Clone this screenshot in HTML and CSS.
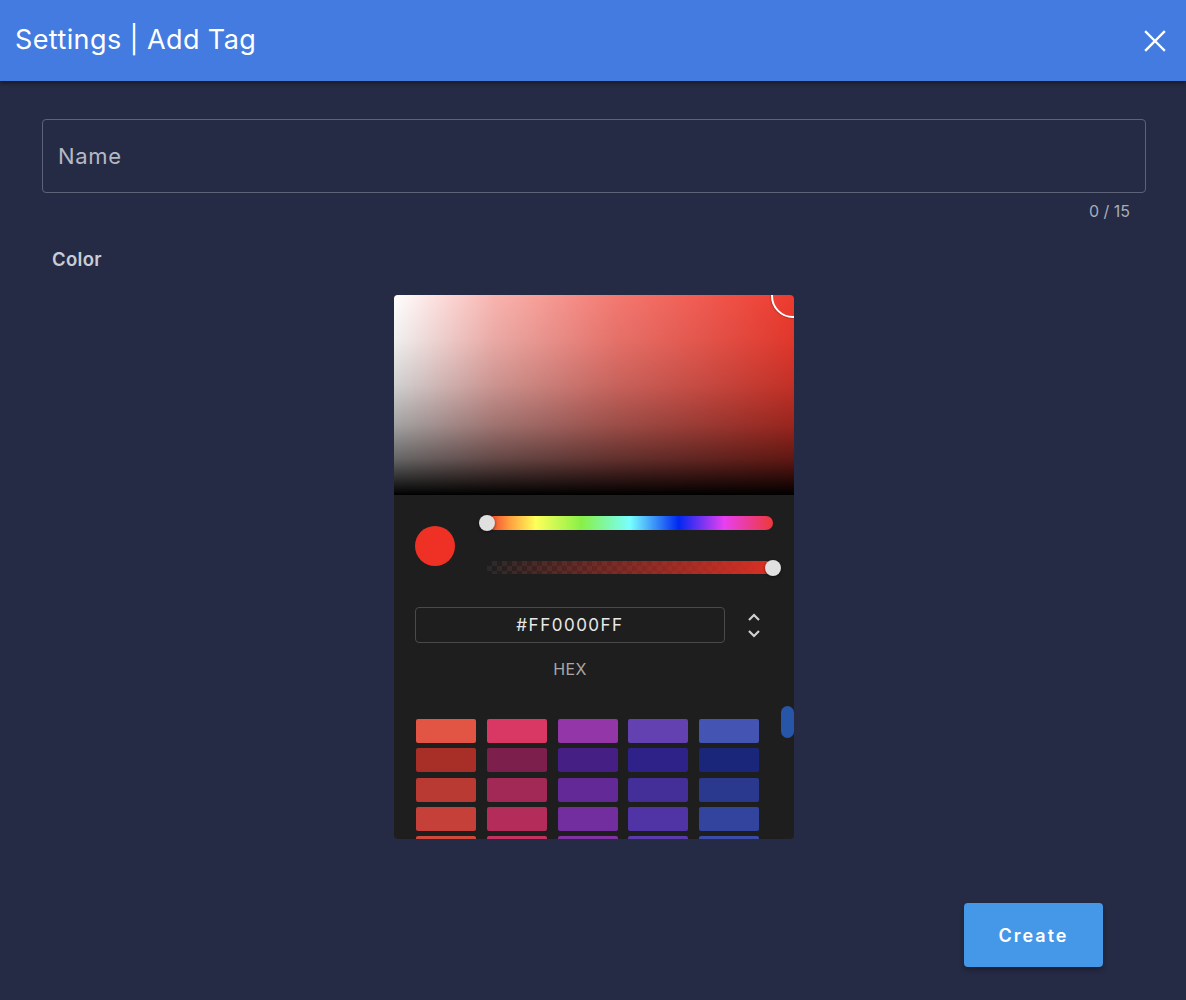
FILE: index.html
```html
<!DOCTYPE html>
<html>
<head>
<meta charset="utf-8">
<link rel="stylesheet" href="styles.css">
</head>
<body>
<header class="bar">
  <div class="title">Settings | Add Tag</div>
  <svg class="close" width="22" height="22" viewBox="0 0 22 22"><path d="M2 2L20 20M20 2L2 20" stroke="#fff" stroke-width="2.4" stroke-linecap="square"/></svg>
</header>
<main class="content">
  <div class="field"><span class="placeholder">Name</span></div>
  <div class="counter">0 / 15</div>
  <div class="label">Color</div>
  <div class="picker">
    <div class="canvas"><div class="canvas-dot"></div></div>
    <div class="controls">
      <div class="preview"></div>
      <div class="sliders">
        <div class="slider hue"><div class="track hue-track"></div><div class="thumb thumb-left"></div></div>
        <div class="slider alpha"><div class="track alpha-track"></div><div class="thumb thumb-right"></div></div>
      </div>
    </div>
    <div class="edit">
      <div class="hex-col">
        <div class="hex-input">#FF0000FF</div>
        <div class="hex-label">HEX</div>
      </div>
      <svg class="toggle" width="16" height="30" viewBox="0 0 16 30"><path d="M3 9L8 4L13 9M3 20L8 25L13 20" fill="none" stroke="#d0d0d0" stroke-width="2.2"/></svg>
    </div>
    <div class="swatches">
      <div class="grid">
        <div class="sw" style="background:#e25544"></div>
        <div class="sw" style="background:#d93865"></div>
        <div class="sw" style="background:#9236a8"></div>
        <div class="sw" style="background:#6341b1"></div>
        <div class="sw" style="background:#4354b3"></div>
        <div class="sw" style="background:#a82e28"></div>
        <div class="sw" style="background:#7c1f4d"></div>
        <div class="sw" style="background:#451f84"></div>
        <div class="sw" style="background:#2e2188"></div>
        <div class="sw" style="background:#1a267a"></div>
        <div class="sw" style="background:#b83a32"></div>
        <div class="sw" style="background:#a22855"></div>
        <div class="sw" style="background:#632996"></div>
        <div class="sw" style="background:#442e98"></div>
        <div class="sw" style="background:#2a388d"></div>
        <div class="sw" style="background:#c44038"></div>
        <div class="sw" style="background:#b42d5a"></div>
        <div class="sw" style="background:#722e9e"></div>
        <div class="sw" style="background:#5034a6"></div>
        <div class="sw" style="background:#32449d"></div>
        <div class="sw" style="background:#d04a3c"></div>
        <div class="sw" style="background:#c4335f"></div>
        <div class="sw" style="background:#8232a3"></div>
        <div class="sw" style="background:#5a3aac"></div>
        <div class="sw" style="background:#3a4ca8"></div>
      </div>
      <div class="scroll-thumb"></div>
    </div>
  </div>
  <div class="actions"><button class="create">Create</button></div>
</main>
</body>
</html>
```
FILE: styles.css
```css
html, body { margin: 0; padding: 0; }
body {
  background: #252b44;
  font-family: "Inter", "Open Sans", sans-serif;
  color: #fff;
  width: 1186px;
  height: 1000px;
  overflow: hidden;
}
.bar {
  height: 81px;
  box-sizing: border-box;
  background: #437be0;
  display: flex;
  align-items: center;
  justify-content: space-between;
  padding: 0 20px 3px 15px;
  box-shadow: 0 2px 4px rgba(0,0,0,0.45);
  position: relative;
}
.title { font-size: 27px; font-weight: 400; letter-spacing: 0.4px; }
.close { display: block; margin-top: 3px; }
.content { padding: 38px 40px 0 42px; }
.field {
  height: 72px;
  border: 1px solid #5c6379;
  border-radius: 4px;
  display: flex;
  align-items: center;
  padding-left: 15px;
}
.placeholder { font-size: 22px; color: #b5b9c5; letter-spacing: 0.7px; }
.counter {
  text-align: right;
  padding-right: 16px;
  margin-top: 9px;
  font-size: 16px;
  color: #a9adba;
  line-height: 19px;
}
.label {
  margin: 27px 0 0 10px;
  font-size: 18.5px;
  font-weight: 600;
  color: #c9ccd6;
  line-height: 22px;
  letter-spacing: 0.3px;
}
.picker {
  width: 400px;
  height: 544px;
  margin: 25px auto 0;
  background: #1e1e1e;
  border-radius: 4px;
  overflow: hidden;
  display: flex;
  flex-direction: column;
}
.canvas {
  height: 200px;
  flex: none;
  position: relative;
  overflow: hidden;
  background:
    linear-gradient(to top, rgba(0,0,0,1) 0%, rgba(0,0,0,0.6) 18%, rgba(0,0,0,0.36) 35%, rgba(0,0,0,0.18) 55%, rgba(0,0,0,0.06) 78%, rgba(0,0,0,0) 100%),
    linear-gradient(to right, #fff, rgba(255,255,255,0.62) 25%, rgba(255,255,255,0.32) 55%, rgba(255,255,255,0)),
    #ee3a2e;
}
.canvas-dot {
  position: absolute;
  right: -21px;
  top: -21px;
  width: 40px;
  height: 40px;
  border: 2px solid #fff;
  border-radius: 50%;
  box-shadow: 0 0 2px rgba(0,0,0,0.6);
}
.controls {
  display: flex;
  align-items: center;
  padding: 19px 13px 0 21px;
  flex: none;
}
.preview {
  width: 40px;
  height: 40px;
  border-radius: 50%;
  background: #ee3124;
  flex: none;
}
.sliders { flex: 1; margin-left: 24px; }
.slider { position: relative; height: 18px; }
.slider.alpha { margin-top: 27px; }
.track {
  position: absolute;
  left: 8px; right: 8px;
  top: 2px;
  height: 14px;
  border-radius: 7px;
}
.hue-track {
  background: linear-gradient(to right, #ee3a2a 0%, #ffa040 8%, #ffff5a 17%, #88f048 33%, #78ffff 50%, #0028f0 67%, #e840f0 83%, #ee3838 100%);
}
.alpha-track {
  height: 13px;
  top: 2px;
  border-radius: 0 7px 7px 0;
  background:
    linear-gradient(to right, rgba(238,49,36,0), rgba(238,49,36,0.9)),
    repeating-conic-gradient(#2a2a2a 0 25%, #1e1e1e 0 50%) 0 0 / 10px 10px;
}
.thumb {
  position: absolute;
  top: 1px;
  width: 16px;
  height: 16px;
  border-radius: 50%;
  background: #e0e0e0;
  box-shadow: 0 1px 3px rgba(0,0,0,0.5);
}
.thumb-left { left: 0; }
.thumb-right { right: 0; }
.edit {
  display: flex;
  align-items: flex-start;
  padding: 30px 0 0 21px;
  flex: none;
}
.hex-col { width: 310px; }
.hex-input {
  height: 34px;
  border: 1px solid #4a4a4a;
  border-radius: 4px;
  display: flex;
  align-items: center;
  justify-content: center;
  font-size: 17px;
  color: #e8e8e8;
  letter-spacing: 1.5px;
}
.hex-label {
  text-align: center;
  margin-top: 17px;
  font-size: 16px;
  color: #a8a8a8;
  line-height: 18px;
  letter-spacing: 0.3px;
}
.toggle { margin: 4px 0 0 21px; display: block; }
.swatches {
  position: relative;
  flex: 1;
  margin-top: 28px;
  overflow: hidden;
}
.grid {
  display: grid;
  grid-template-columns: repeat(5, 60px);
  column-gap: 10.8px;
  row-gap: 5.3px;
  padding: 13px 0 0 22px;
}
.sw { height: 24px; border-radius: 2px; }
.scroll-thumb {
  position: absolute;
  right: 0;
  top: 0;
  width: 13px;
  height: 32px;
  border-radius: 7px;
  background: #2756a8;
}
.actions {
  display: flex;
  justify-content: flex-end;
  padding-right: 43px;
  margin-top: 64px;
}
.create {
  width: 139px;
  height: 64px;
  border: none;
  border-radius: 4px;
  background: #4597e8;
  color: #fff;
  font-family: "Inter", "Open Sans", sans-serif;
  font-size: 18px;
  font-weight: 600;
  letter-spacing: 2px;
  box-shadow: 0 3px 5px rgba(0,0,0,0.3);
}
```
